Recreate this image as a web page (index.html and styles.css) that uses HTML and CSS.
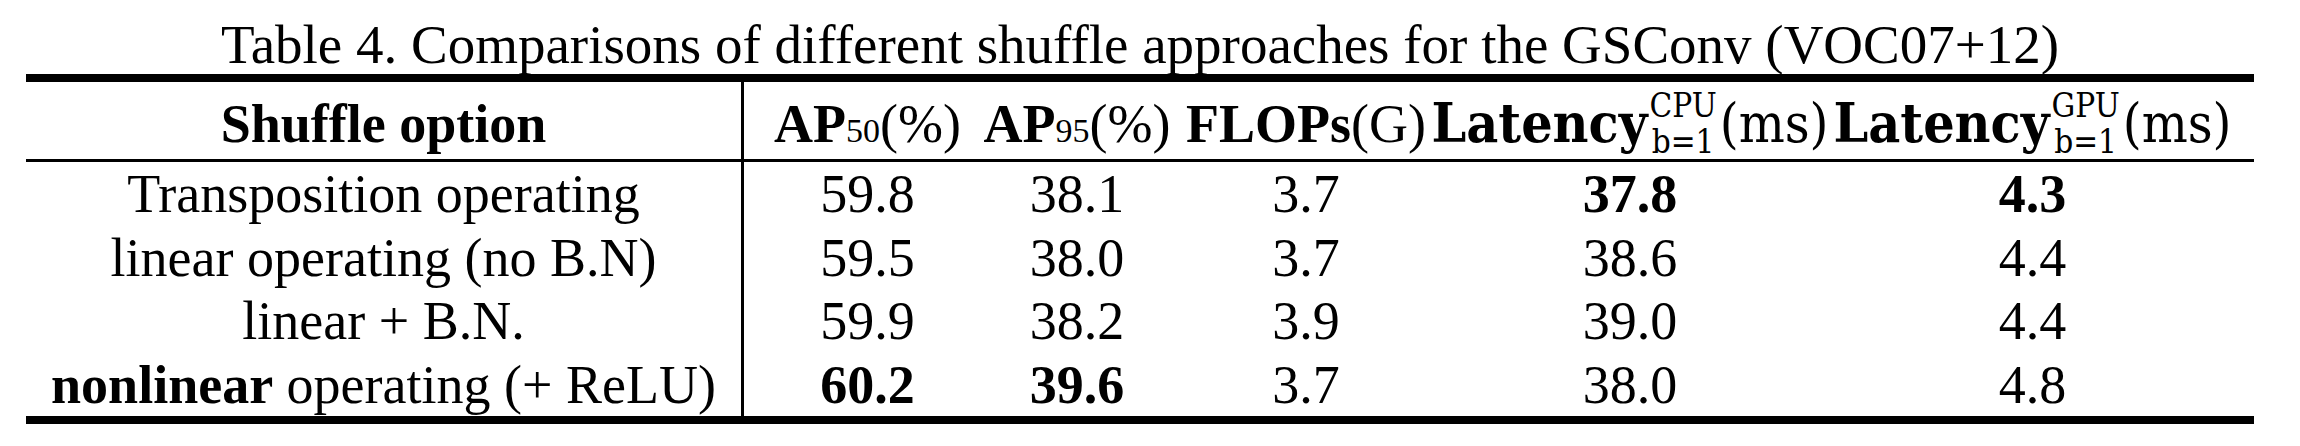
FILE: index.html
```html
<!DOCTYPE html>
<html lang="en">
  <head>
    <meta charset="UTF-8" />
    <meta name="viewport" content="width=device-width, initial-scale=1.0" />
    <title>Table 4 - Shuffle approaches for GSConv</title>
    <link rel="stylesheet" href="styles.css">
  </head>
  <body>
    <div class="figure">
      <p class="caption">Table 4. Comparisons of different shuffle approaches for the GSConv (VOC07+12)</p>

      <div class="table">
        <!-- header -->
        <div class="cell head first"><span><b>Shuffle option</b></span></div>
        <div class="cell head"><span><b>AP</b><span class="idx">50</span>(%)</span></div>
        <div class="cell head"><span><b>AP</b><span class="idx">95</span>(%)</span></div>
        <div class="cell head"><span><b>FLOPs</b>(G)</span></div>
        <div class="cell head">
          <span class="eq"><b>Latency</b><span class="stack"><span>CPU</span><span>b=1</span></span>(ms)</span>
        </div>
        <div class="cell head">
          <span class="eq"><b>Latency</b><span class="stack"><span>GPU</span><span>b=1</span></span>(ms)</span>
        </div>

        <!-- rows -->
        <div class="cell first"><span>Transposition operating</span></div>
        <div class="cell"><span>59.8</span></div>
        <div class="cell"><span>38.1</span></div>
        <div class="cell"><span>3.7</span></div>
        <div class="cell"><span><b>37.8</b></span></div>
        <div class="cell"><span><b>4.3</b></span></div>

        <div class="cell first"><span>linear operating (no B.N)</span></div>
        <div class="cell"><span>59.5</span></div>
        <div class="cell"><span>38.0</span></div>
        <div class="cell"><span>3.7</span></div>
        <div class="cell"><span>38.6</span></div>
        <div class="cell"><span>4.4</span></div>

        <div class="cell first"><span>linear + B.N.</span></div>
        <div class="cell"><span>59.9</span></div>
        <div class="cell"><span>38.2</span></div>
        <div class="cell"><span>3.9</span></div>
        <div class="cell"><span>39.0</span></div>
        <div class="cell"><span>4.4</span></div>

        <div class="cell first"><span><b>nonlinear</b> operating (+ ReLU)</span></div>
        <div class="cell"><span><b>60.2</b></span></div>
        <div class="cell"><span><b>39.6</b></span></div>
        <div class="cell"><span>3.7</span></div>
        <div class="cell"><span>38.0</span></div>
        <div class="cell"><span>4.8</span></div>
      </div>
    </div>
  </body>
</html>
```

FILE: styles.css
```css
* {
  margin: 0;
  padding: 0;
  box-sizing: border-box;
}

body {
  font-family: "Liberation Serif", "Times New Roman", serif;
  color: #000;
  background: #fff;
}

.figure {
  width: 2228px;
  margin-left: 26px;
}

.caption {
  font-size: 55px;
  line-height: 59px;
  padding-top: 15px;
  text-align: center;
  white-space: nowrap;
}

.table {
  display: grid;
  grid-template-columns: 718px 247px 172px 286px 362px 443px;
  grid-template-rows: 80px repeat(4, 63.5px);
  border-top: 8px solid #000;
  border-bottom: 8px solid #000;
  font-size: 54px;
}

.cell {
  display: flex;
  justify-content: center;
  align-items: flex-start;
  white-space: nowrap;
  line-height: 63.5px;
  padding-top: 1px;
}

.cell.head {
  line-height: 62px;
  padding-top: 11px;
  border-bottom: 3px solid #000;
}

.cell.first {
  border-right: 3px solid #000;
}

.idx {
  font-size: 34px;
}

.eq {
  font-family: "DejaVu Serif", serif;
  font-stretch: condensed;
  font-size: 54px;
}

.eq b {
  font-size: 55px;
  line-height: 40px;
}

.stack {
  display: inline-flex;
  flex-direction: column;
  align-items: center;
  font-size: 33px;
  line-height: 36px;
  vertical-align: 25px;
  margin: -40px 3px -40px 2px;
}
```
